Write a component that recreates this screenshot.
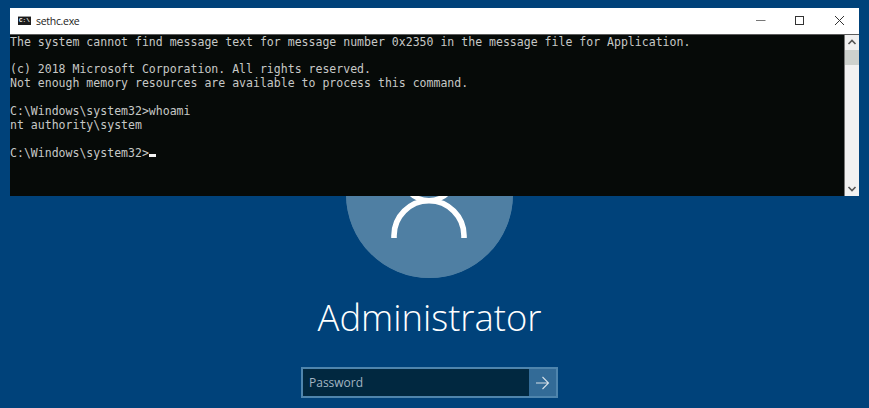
<style>
:global(body) { margin: 0; background: #00427a; }
.page { position: relative; width: 869px; height: 408px; overflow: hidden; background: #00427a; }
.login { display: flex; flex-direction: column; align-items: center; padding-top: 111px; padding-right: 10px; }
.avatar { width: 167px; height: 167px; border-radius: 50%; background: #4f7fa3; display: block; }
.name { margin-top: 11px; font: 300 36.4px/56px "Open Sans", sans-serif; color: #fff; }
.field { margin-top: 22px; width: 257px; height: 31px; box-sizing: border-box; border: 2px solid #4f85ad; display: flex; background: #012840; }
.ph { flex: 1; padding-left: 6px; font: 12px/27px "Open Sans", sans-serif; color: #a3b5c2; }
.go { width: 27px; background: #336b97; display: flex; align-items: center; justify-content: center; }
.win { position: absolute; left: 10px; top: 8px; width: 849px; height: 188px; background: #fff; display: flex; flex-direction: column; }
.bar { height: 26.5px; display: flex; align-items: center; background: #fff; flex: none; border-bottom: 1px solid #5c5c5c; box-sizing: border-box; }
.ico { margin-left: 8px; width: 13px; height: 9px; background: #1c1c1c; border-top: 1px solid #9a9a9a; box-sizing: border-box; color: #fff; font: bold 6px/8px "Liberation Mono", monospace; overflow: hidden; padding-left: 1px; }
.title { margin-left: 5px; font: 10.5px "Open Sans", sans-serif; color: #222; letter-spacing: -0.3px; }
.ctl { margin-left: auto; display: flex; }
.ctl svg { display: block; }
.body { flex: 1; display: flex; min-height: 0; }
.term { flex: 1; background: #060a08; margin: 0; font: 11.54px/13.9px "DejaVu Sans Mono", monospace; color: #c6c8c6; padding-top: 1px; white-space: pre; }
.cur { display: inline-block; width: 7px; height: 3px; background: #f2f2f2; }
.sb { width: 15px; background: #f1f1f1; display: flex; flex-direction: column; border-left: 1px solid #777; box-sizing: border-box; }
.sb svg { display: block; flex: none; }
.thumb { height: 15px; background: #cdd1cd; flex: none; }
.fill { flex: 1; }
</style>

<div class="page">
  <div class="login">
    <svg class="avatar" viewBox="0 0 167 167">
      <circle cx="83.5" cy="83.5" r="83.5" fill="#4f7fa3" />
      <circle cx="83" cy="62" r="27.5" fill="none" stroke="#fff" stroke-width="5" />
      <path d="M48 127V124.7A35 35 0 0 1 118 124.7V127" fill="none" stroke="#fff" stroke-width="5.6" />
    </svg>
    <div class="name">Administrator</div>
    <div class="field">
      <div class="ph">Password</div>
      <div class="go">
        <svg width="15" height="14" viewBox="0 0 15 14" fill="none" stroke="#d5e0e8" stroke-width="1.1"><path d="M1 7H13.5M7.5 1L13.5 7L7.5 13" /></svg>
      </div>
    </div>
  </div>

  <div class="win">
    <div class="bar">
      <div class="ico">C:\</div>
      <div class="title">sethc.exe</div>
      <div class="ctl">
        <svg width="138" height="25" viewBox="0 0 138 25" fill="none" stroke="#333" stroke-width="1">
          <path d="M35 12.5H44.5" stroke="#777" />
          <rect x="74.5" y="8.5" width="8" height="8" />
          <path d="M114 8L123 17M123 8L114 17" />
        </svg>
      </div>
    </div>
    <div class="body">
<pre class="term">The system cannot find message text for message number 0x2350 in the message file for Application.

(c) 2018 Microsoft Corporation. All rights reserved.
Not enough memory resources are available to process this command.

C:\Windows\system32&gt;whoami
nt authority\system

C:\Windows\system32&gt;<span class="cur"></span></pre>
      <div class="sb">
        <svg width="14" height="15" viewBox="0 0 14 15" fill="none" stroke="#555" stroke-width="1.6"><path d="M3.5 9L7 5.5L10.5 9" /></svg>
        <div class="thumb"></div>
        <div class="fill"></div>
        <svg width="14" height="15" viewBox="0 0 14 15" fill="none" stroke="#555" stroke-width="1.6"><path d="M3.5 6L7 9.5L10.5 6" /></svg>
      </div>
    </div>
  </div>
</div>
